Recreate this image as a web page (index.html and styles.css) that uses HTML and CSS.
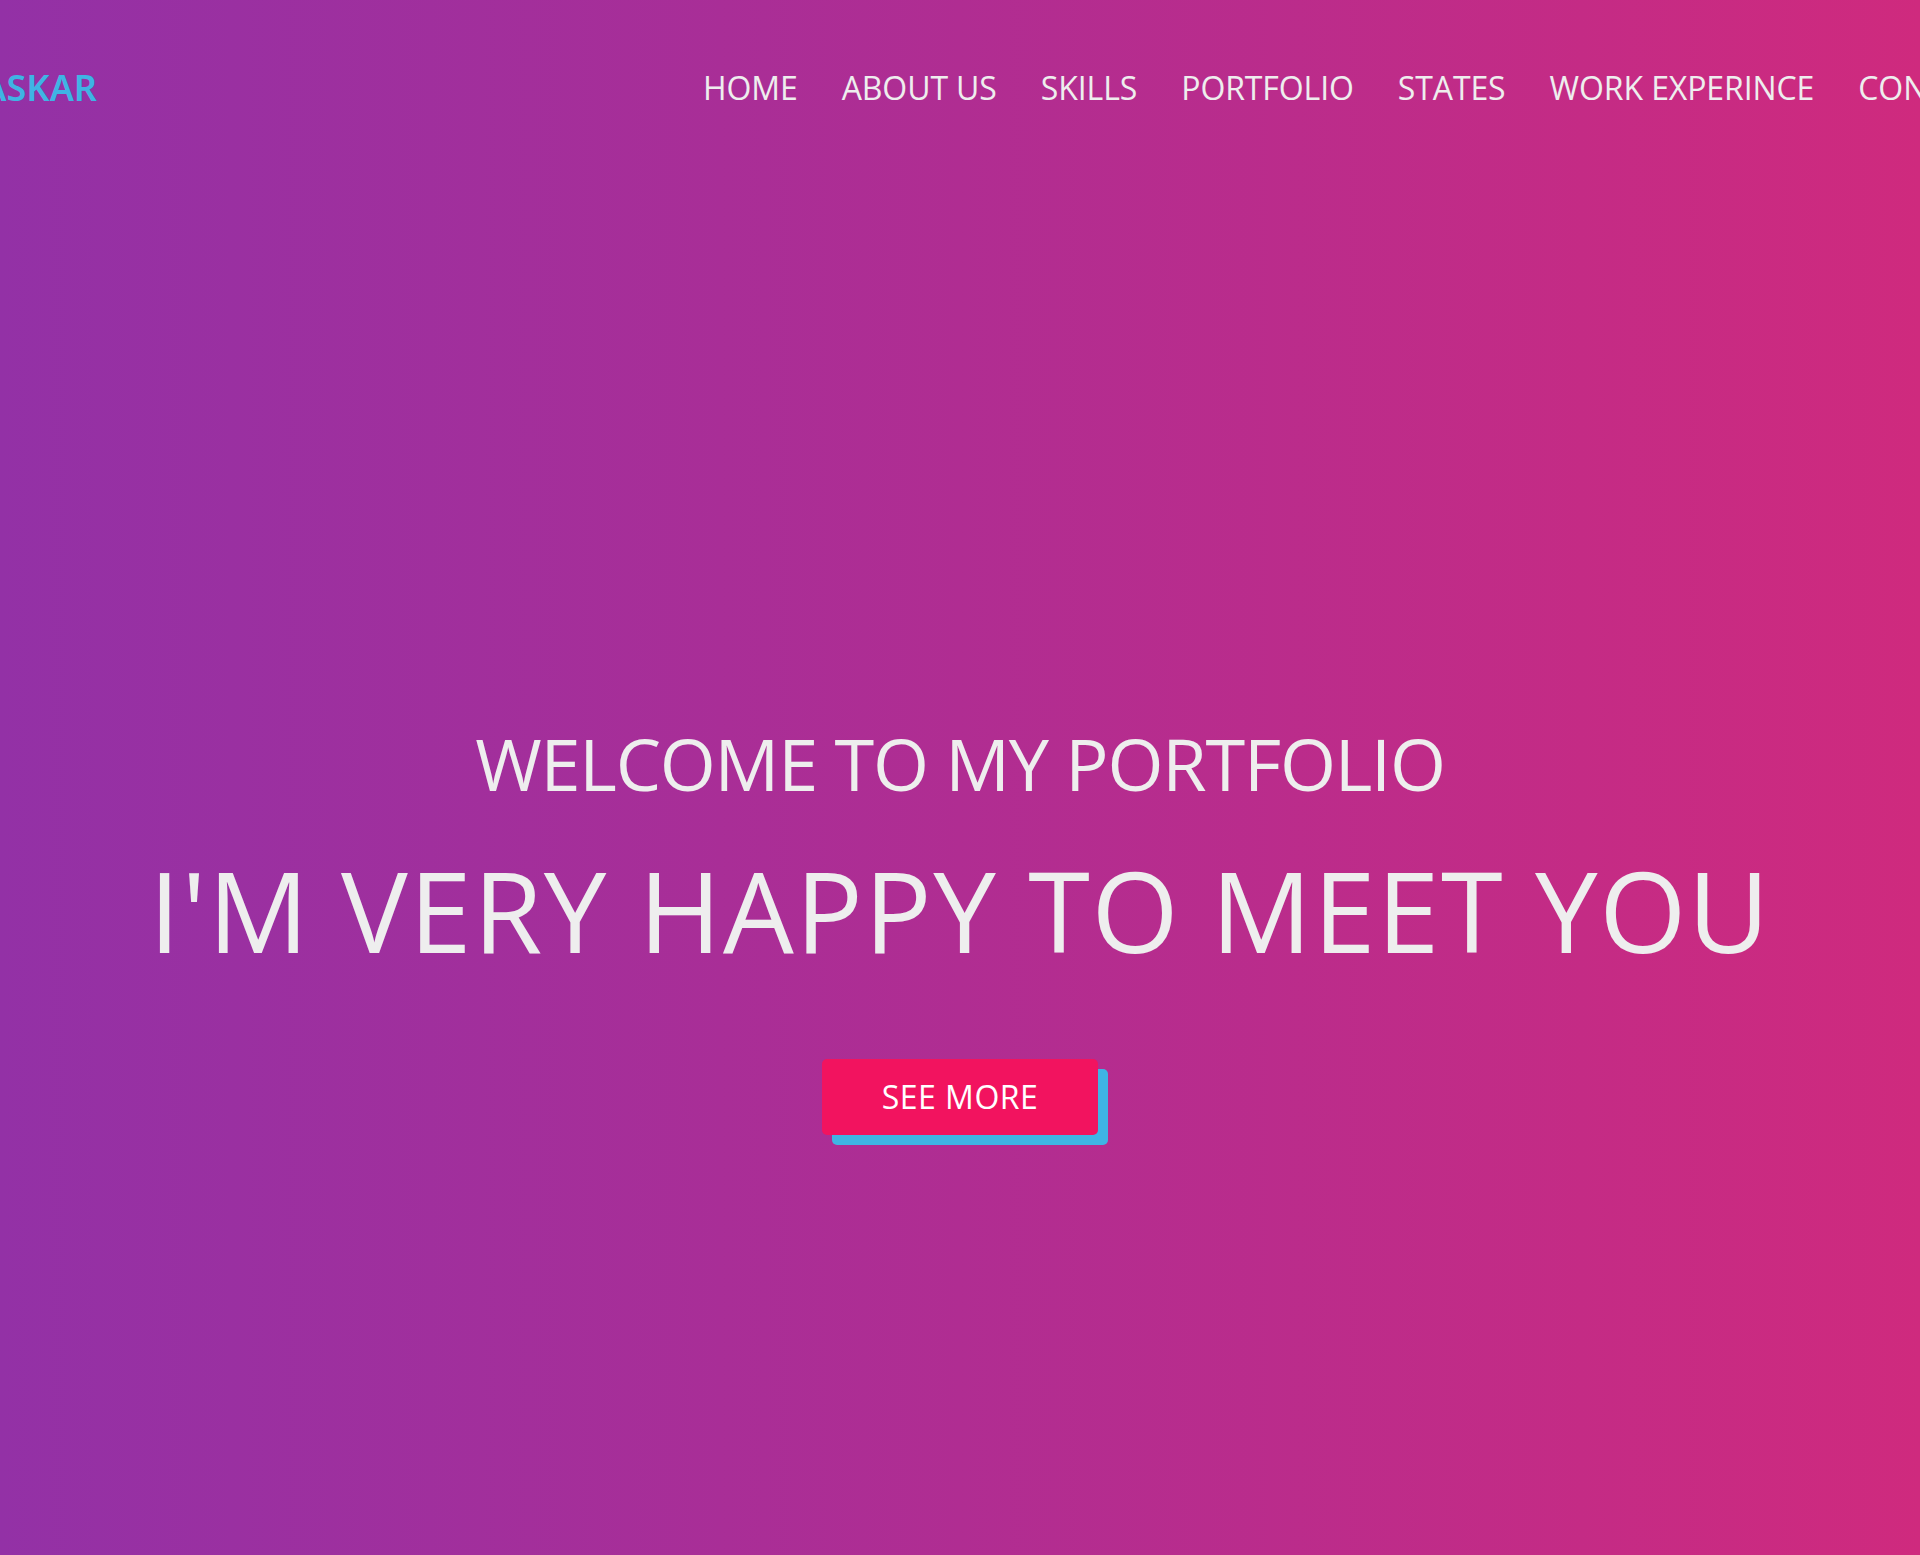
FILE: index.html
```html
<!DOCTYPE html>
<html lang="en">
<head>
<meta charset="utf-8">
<title>Portfolio</title>
<link rel="stylesheet" href="styles.css">
</head>
<body>
<div class="page">
  <header class="header">
    <div class="logo-box">
      <a class="logo" href="#">BASKAR</a>
    </div>
    <nav class="nav">
      <a href="#">HOME</a>
      <a href="#">ABOUT US</a>
      <a href="#">SKILLS</a>
      <a href="#">PORTFOLIO</a>
      <a href="#">STATES</a>
      <a href="#">WORK EXPERINCE</a>
      <a href="#">CONTACT</a>
    </nav>
  </header>
  <section class="hero">
    <h2 class="welcome">WELCOME TO MY PORTFOLIO</h2>
    <h1 class="happy">I'M VERY HAPPY TO MEET YOU</h1>
    <a class="btn" href="#">SEE MORE</a>
  </section>
</div>
</body>
</html>
```
FILE: styles.css
```css
html, body {
  margin: 0;
  padding: 0;
  overflow: hidden;
}
.page {
  height: 1555px;
  background: linear-gradient(to right, #9331a6 0%, #b02d92 50%, #cf2a7e 100%);
  font-family: "Open Sans", "Noto Sans", sans-serif;
  color: #eeeeee;
}
.header {
  display: flex;
  align-items: center;
  height: 174px;
  white-space: nowrap;
}
.logo-box {
  flex: 0 0 97px;
  width: 97px;
  display: flex;
  justify-content: flex-end;
  overflow: hidden;
}
.logo {
  flex: none;
  font-family: "Noto Sans", "Open Sans", sans-serif;
  font-weight: 600;
  font-size: 36px;
  color: #3fb4e4;
  text-decoration: none;
}
.nav {
  display: flex;
  flex: none;
  gap: 44px;
  margin-left: 606px;
}
.nav a {
  color: #eeeeee;
  text-decoration: none;
  font-size: 32px;
  letter-spacing: -0.1px;
}
.hero {
  display: flex;
  flex-direction: column;
  align-items: center;
  text-align: center;
  padding-top: 546px;
}
.welcome {
  margin: 0;
  font-weight: 400;
  font-size: 72px;
  line-height: 1.2;
  letter-spacing: -1.2px;
}
.happy {
  margin: 37px 0 0;
  font-weight: 400;
  font-size: 112px;
  line-height: 1.2;
  letter-spacing: 1.6px;
}
.btn {
  margin-top: 81px;
  display: block;
  width: 276px;
  height: 76px;
  line-height: 76px;
  background: #f2135f;
  color: #ffffff;
  border-radius: 5px;
  box-shadow: 10px 10px 0 #3fb4e4;
  text-decoration: none;
  font-size: 32px;
  letter-spacing: 0.5px;
}
```
